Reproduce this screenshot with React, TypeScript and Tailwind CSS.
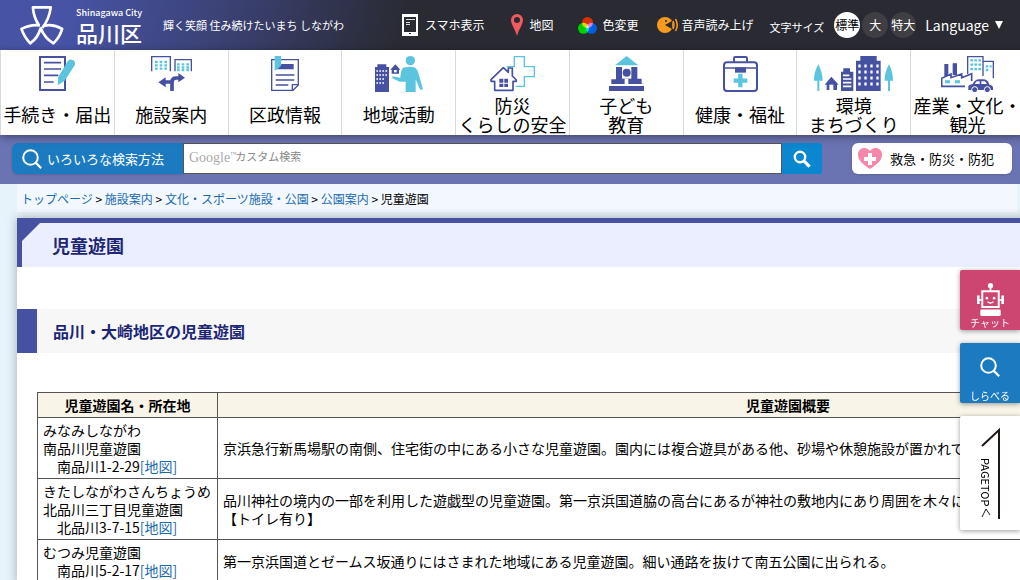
import type { ReactNode } from "react";

type MenuItem = {
  lines: string[];
  icon: ReactNode;
};

type Park = {
  lines: string[];
  address: string;
  outline: string[];
};

const parks: Park[] = [
  {
    lines: ["みなみしながわ", "南品川児童遊園"],
    address: "南品川1-2-29",
    outline: [
      "京浜急行新馬場駅の南側、住宅街の中にある小さな児童遊園。園内には複合遊具がある他、砂場や休憩施設が置かれている。",
    ],
  },
  {
    lines: ["きたしながわさんちょうめ", "北品川三丁目児童遊園"],
    address: "北品川3-7-15",
    outline: [
      "品川神社の境内の一部を利用した遊戯型の児童遊園。第一京浜国道脇の高台にあるが神社の敷地内にあり周囲を木々に囲まれている。",
      "【トイレ有り】",
    ],
  },
  {
    lines: ["むつみ児童遊園"],
    address: "南品川5-2-17",
    outline: [
      "第一京浜国道とゼームス坂通りにはさまれた地域にある児童遊園。細い通路を抜けて南五公園に出られる。",
    ],
  },
];

const crumbs = ["トップページ", "施設案内", "文化・スポーツ施設・公園", "公園案内"];

const BLUE = "#4751a1";
const CYAN = "#5bc5df";

const menu: MenuItem[] = [
  {
    lines: ["手続き・届出"],
    icon: (
      <svg viewBox="0 0 108 108" className="h-9 w-9" fill="none">
        <path d="M3 3H78V102H3Z" stroke={BLUE} strokeWidth="6" />
        <path d="M15 20H66M15 39H66M15 58H58M15 78H44" stroke={BLUE} strokeWidth="5" />
        <path d="M86 16Q93 7 103 13Q111 19 107 28L77 74L56 88L58 62Z" fill={CYAN} />
      </svg>
    ),
  },
  {
    lines: ["施設案内"],
    icon: (
      <svg viewBox="0 0 123 108" className="h-9 w-[41px]" fill="none">
        <path d="M2 46V2H58V46M72 46V11H121V46" stroke={BLUE} strokeWidth="4" />
        <path
          d="M12 18H48M12 28H48M12 38H48M78 25H114M78 34H114M78 42H114"
          stroke={CYAN}
          strokeWidth="7"
          strokeDasharray="8 6"
        />
        <path d="M63 105V78Q63 66 76 66H86M63 78H38" stroke={BLUE} strokeWidth="11" />
        <path d="M22 79L44 64V94ZM102 65L82 51V79Z" fill={BLUE} />
      </svg>
    ),
  },
  {
    lines: ["区政情報"],
    icon: (
      <svg viewBox="0 0 84 108" className="h-9 w-7" fill="none">
        <path d="M2 11H82V87L66 103H2Z" stroke={BLUE} strokeWidth="4" />
        <path d="M64 103V86H82" stroke={BLUE} strokeWidth="4" />
        <path d="M14 57H70M14 72H70M14 87H52" stroke={BLUE} strokeWidth="4" />
        <path d="M32 24H68V40H18Z" fill={BLUE} />
        <path d="M11 0H30V30L11 45Z" fill={CYAN} />
      </svg>
    ),
  },
  {
    lines: ["地域活動"],
    icon: (
      <svg viewBox="0 0 144 108" className="h-9 w-12" fill="none">
        <path d="M0 108V33H7V25H34V33H42V108Z" fill={BLUE} />
        <path
          d="M4 45H38M4 57H38M4 69H28M4 81H28"
          stroke="#fff"
          strokeWidth="5"
          strokeDasharray="5 4"
        />
        <path d="M46 41L61 25L76 41H72V53H50V41Z" fill={BLUE} />
        <path d="M57 42H65V49H57Z" fill="#fff" />
        <circle cx="106" cy="14" r="14" fill={CYAN} />
        <path
          d="M84 35Q106 29 121 35Q128 40 131 54L144 99L136 102L122 70V108H92V77H74L52 67L52 61L76 65Q78 40 84 35Z"
          fill={CYAN}
        />
      </svg>
    ),
  },
  {
    lines: ["防災", "くらしの安全"],
    icon: (
      <svg viewBox="0 0 135 108" className="h-9 w-[45px]" fill="none">
        <path
          d="M50 32H73V2H103V32H133V62H103V91H77"
          stroke={CYAN}
          strokeWidth="4"
        />
        <path
          d="M3 71L40 35L55 49V36H67V60L79 72V76H69V103H14V76H3Z"
          fill="#fff"
          stroke={BLUE}
          strokeWidth="5"
          strokeLinejoin="round"
        />
        <path d="M28 68H40V80H28ZM43 68H54V80H43ZM28 83H40V93H28ZM43 83H54V93H43Z" fill={BLUE} />
      </svg>
    ),
  },
  {
    lines: ["子ども", "教育"],
    icon: (
      <svg viewBox="0 0 105 108" className="h-9 w-[35px]">
        <path d="M53 0L88 28H18Z" fill={CYAN} />
        <path
          d="M21 33H85V68H98V83H105V105H0V90H7V70H21Z"
          fill={BLUE}
        />
        <path d="M39 33H67V68H39Z" fill="#fff" />
        <path d="M0 84H105V90H0ZM47 68H58V88H47Z" fill="#fff" />
        <circle cx="53" cy="50" r="12" fill={BLUE} />
      </svg>
    ),
  },
  {
    lines: ["健康・福祉"],
    icon: (
      <svg viewBox="0 0 105 108" className="h-9 w-[35px]" fill="none">
        <rect x="3" y="19" width="99" height="86" rx="9" stroke={BLUE} strokeWidth="6" />
        <path d="M33 18V7Q33 3 37 3H68Q72 3 72 7V18" stroke={BLUE} strokeWidth="6" />
        <path d="M5 36H100" stroke={BLUE} strokeWidth="5" />
        <path d="M36 34H69V50H36Z" fill={BLUE} />
        <path d="M52 53V94M32 74H73" stroke={CYAN} strokeWidth="13" />
      </svg>
    ),
  },
  {
    lines: ["環境", "まちづくり"],
    icon: (
      <svg viewBox="0 0 237 108" className="h-9 w-[79px]" fill="none">
        <path
          d="M13 24C3 42 0 58 0 74H10V105H16V74H26C26 58 22 42 13 24ZM225 24C215 42 212 58 212 74H222V105H228V74H237C237 58 234 42 225 24Z"
          fill={CYAN}
        />
        <path d="M32 86L52 62L74 86H69V102H38V86Z" fill={BLUE} />
        <path d="M46 86H58V102H46Z" fill="#fff" />
        <path d="M81 105V47H88V37H108V47H118V105Z" fill={BLUE} />
        <path d="M87 58H106M87 69H112M87 80H112M87 91H112" stroke="#fff" strokeWidth="5" />
        <path d="M126 105V14H139V0H188V14H200V105Z" fill={BLUE} />
        <path
          d="M133 30H196M133 48H196M133 66H196M133 84H196"
          stroke="#fff"
          strokeWidth="9"
          strokeDasharray="7 11"
        />
      </svg>
    ),
  },
  {
    lines: ["産業・文化・", "観光"],
    icon: (
      <svg viewBox="0 0 159 108" className="h-9 w-[53px]" fill="none">
        <path d="M80 54V2H126V60M126 16H157V67" stroke={BLUE} strokeWidth="4" />
        <path
          d="M88 13H122M88 26H122M88 39H122M134 31H152M134 42H145"
          stroke={CYAN}
          strokeWidth="7"
          strokeDasharray="8 4"
        />
        <path d="M10 60V24H22V60ZM35 57V22H48V57Z" fill={BLUE} />
        <path
          d="M72 91H2V67L30 54V65L62 54V65L92 53V75"
          stroke={BLUE}
          strokeWidth="5"
        />
        <path d="M12 77H72" stroke={CYAN} strokeWidth="9" strokeDasharray="15 15" />
        <path
          d="M82 102V91Q83 86 95 84Q102 70 114 70H129Q141 71 145 86Q156 88 156 95V102Z"
          fill={BLUE}
        />
        <path d="M101 84L107 76H116V84ZM121 76H132L138 84H121Z" fill="#fff" />
        <circle cx="101" cy="101" r="9" fill={BLUE} stroke="#fff" strokeWidth="3" />
        <circle cx="139" cy="101" r="9" fill={BLUE} stroke="#fff" strokeWidth="3" />
      </svg>
    ),
  },
];

function SearchIcon({ className }: { className: string }) {
  return (
    <svg viewBox="0 0 20 20" className={className} fill="none" stroke="#fff">
      <circle cx="8.5" cy="8.5" r="7.3" strokeWidth="2" />
      <path d="M13.6 13.6L19.2 19.2" strokeWidth="2.2" />
    </svg>
  );
}

function Logo() {
  return (
    <a href="#" className="flex items-center gap-3 text-white">
      <svg
        viewBox="0 0 130 116"
        className="h-[39px] w-[44px]"
        fill="none"
        stroke="#fff"
        strokeWidth="8"
        strokeLinejoin="round"
      >
        <path d="M56 58C46 42 39 24 38 4H91C88 28 80 47 66 65" />
        <path d="M59 58C41 55 22 59 4 68C9 84 18 98 30 111C44 101 55 88 60 68" />
        <path d="M60 63C68 84 82 101 99 111C112 99 120 84 125 68C108 58 89 54 70 59" />
      </svg>
      <span className="flex w-[67px] flex-col">
        <span className="text-[9px] leading-[14px] font-medium">Shinagawa City</span>
        <span className="text-[22px] leading-6 font-medium">品川区</span>
      </span>
    </a>
  );
}

function Header() {
  return (
    <header className="flex h-[50px] items-center bg-[linear-gradient(105deg,#4753a5_7%,#3b4274_22%,#292a32_40%)] pl-5 text-xs whitespace-nowrap text-white">
      <Logo />
      <p className="ml-5 text-[11px]">輝く笑顔 住み続けたいまち しながわ</p>

      <div className="ml-auto flex items-center pr-[17px]">
        <a href="#" className="flex items-center gap-[7px]">
          <svg viewBox="0 0 16 22" className="h-[22px] w-4">
            <path d="M0 0H16V22H0Z" fill="#fff" />
            <path d="M2 3H14V18H2Z" fill="#2a2a32" />
            <path d="M4 5H13V6H4ZM4 8H8V9H4ZM4 10H8V11H4Z" fill="#ddd" />
            <path d="M7 19H9V20H7Z" fill="#222" />
          </svg>
          スマホ表示
        </a>
        <a href="#" className="ml-[26px] flex items-center gap-[7px]">
          <svg viewBox="0 0 12 22" className="h-[22px] w-3">
            <path
              fillRule="evenodd"
              d="M6 0A6 6 0 0 1 12 6C12 10 8 15 6 22C4 15 0 10 0 6A6 6 0 0 1 6 0ZM6 3A3 3 0 1 0 6 9A3 3 0 1 0 6 3Z"
              fill="#f15a5e"
            />
          </svg>
          地図
        </a>
        <a href="#" className="ml-6 flex items-center gap-[6px]">
          <svg viewBox="0 0 19 17" className="h-[17px] w-[19px]">
            <g className="isolate">
              <circle cx="9.5" cy="5.5" r="5.5" fill="#d83000" />
              <circle cx="5.5" cy="11.3" r="5.5" fill="#00d000" className="mix-blend-screen" />
              <circle cx="13.5" cy="11.3" r="5.5" fill="#0060e0" className="mix-blend-screen" />
            </g>
          </svg>
          色変更
        </a>
        <a href="#" className="ml-[18px] flex items-center gap-1">
          <svg viewBox="0 0 21 16" className="h-4 w-[21px]" fill="none">
            <circle cx="8" cy="8" r="8" fill="#f9991d" />
            <path d="M8 8L15 4V12Z" fill="#2a2a32" />
            <circle cx="9" cy="4" r="1" fill="#2a2a32" />
            <path d="M16 4Q18 8 16 12M18.5 2Q22 8 18.5 14" stroke="#f9991d" strokeWidth="1.500" />
          </svg>
          音声読み上げ
        </a>

        <div className="ml-4 flex items-center gap-[2px]">
          <span className="mr-2 pt-1 text-[11px]">文字サイズ</span>
          <button className="size-[26px] rounded-full bg-white text-black">標準</button>
          <button className="size-[26px] rounded-full bg-[#3e3e43]">大</button>
          <button className="size-[26px] rounded-full bg-[#3e3e43]">特大</button>
        </div>

        <button className="ml-[9px] flex items-center gap-[6px] text-sm">
          Language
          <svg viewBox="0 0 8 8" className="size-2">
            <path d="M0 0H8L4 8Z" fill="#fff" />
          </svg>
        </button>
      </div>
    </header>
  );
}

function GlobalMenu() {
  return (
    <nav className="relative -mr-1 grid grid-cols-9 bg-white shadow-[0_2px_8px_rgba(0,0,0,0.4)]">
      {menu.map((item) => (
        <a
          key={item.lines[0]}
          href="#"
          className="flex h-[85px] flex-col items-center border-l border-[#d9d9e0] pt-[6px] text-lg leading-[19px] whitespace-nowrap text-black"
        >
          {item.icon}
          <span className="flex flex-1 flex-col items-center justify-center pt-[2px]">
            {item.lines.map((line) => (
              <span key={line}>{line}</span>
            ))}
          </span>
        </a>
      ))}
    </nav>
  );
}

function SearchBar() {
  return (
    <div className="flex h-[49px] items-start bg-[#6b74b2] pt-2 pr-2 pl-3 text-[13px]">
      <button className="flex h-[31px] w-[171px] items-center gap-[5px] rounded-l-md bg-[#1c7bc0] pl-[10px] text-white shadow">
        <SearchIcon className="size-5" />
        いろいろな検索方法
      </button>
      <form className="flex flex-1" onSubmit={(e) => e.preventDefault()}>
        <label className="flex h-[31px] flex-1 items-center border border-[#555] bg-white pl-[5px]">
          <span className="pb-[2px] font-['Liberation_Serif',serif] text-sm text-[#aaa]">
            Google
          </span>
          <span className="mb-2 w-[5px] font-['Liberation_Serif',serif] text-[6px] text-[#999]">
            ™
          </span>
          <input
            type="text"
            aria-label="サイト内検索"
            placeholder="カスタム検索"
            className="min-w-0 flex-1 pb-1 text-[11px] outline-none placeholder:text-[#888]"
          />
        </label>
        <button
          aria-label="検索"
          className="flex h-[31px] w-10 items-center justify-center rounded-r-xs bg-[#0b87cf]"
        >
          <svg viewBox="0 0 18 18" className="size-[18px]" fill="none" stroke="#fff">
            <circle cx="7" cy="7" r="5.2" strokeWidth="2.4" />
            <path d="M10.8 10.8L16.6 16.6" strokeWidth="3.2" />
          </svg>
        </button>
      </form>
      <a
        href="#"
        className="ml-[30px] flex h-[31px] w-40 items-center gap-2 rounded-md bg-white pl-[6px] text-black shadow"
      >
        <svg viewBox="0 0 24 21" className="h-[21px] w-6">
          <path
            d="M12 21C6 17 0 13 0 6.500C0 2.500 3 0 6.300 0C9 0 11 1.500 12 3C13 1.500 15 0 17.700 0C21 0 24 2.500 24 6.500C24 13 18 17 12 21Z"
            fill="#f587a8"
          />
          <path d="M10 5H14V9H18V13H14V17H10V13H6V9H10Z" fill="#fff" />
        </svg>
        救急・防災・防犯
      </a>
    </div>
  );
}

function Breadcrumb() {
  return (
    <nav
      aria-label="現在位置"
      className="mr-[3px] ml-[17px] h-7 bg-[#f2f8fd] pl-1 text-xs leading-[30px] whitespace-nowrap"
    >
      {crumbs.map((crumb) => (
        <span key={crumb}>
          <a href="#" className="text-[#1c6bb0]">
            {crumb}
          </a>
          {" > "}
        </span>
      ))}
      児童遊園
    </nav>
  );
}

function ParkTable() {
  return (
    <table className="w-full border-collapse text-sm leading-[18px]">
      <thead>
        <tr className="bg-[#f9f4e8]">
          <th className="w-[180px] border border-[#555] px-[5px] py-[3px]">児童遊園名・所在地</th>
          <th className="border border-[#555] px-[5px] py-[3px]">児童遊園概要</th>
        </tr>
      </thead>
      <tbody>
        {parks.map((park) => (
          <tr key={park.address}>
            <td className="border border-[#555] px-[5px] py-[3px] whitespace-nowrap">
              {park.lines.map((line) => (
                <p key={line}>{line}</p>
              ))}
              <p>
                {"\u3000"}
                {park.address}
                <a href="#" className="text-[#1c6bb0]">
                  [地図]
                </a>
              </p>
            </td>
            <td className="border border-[#555] px-[5px] py-[3px]">
              {park.outline.map((line) => (
                <p key={line}>{line}</p>
              ))}
            </td>
          </tr>
        ))}
      </tbody>
    </table>
  );
}

function SideButtons() {
  return (
    <aside className="fixed top-[270px] right-0 flex w-[60px] flex-col gap-[13px] text-[10px] leading-[14px] text-white">
      <button className="flex h-[60px] flex-col items-center justify-end rounded-l-xs bg-[#cc4671] shadow-[0_1px_5px_rgba(0,0,0,0.4)]">
        <svg viewBox="0 0 82 100" className="h-[33px] w-[27px]" fill="none">
          <circle cx="41" cy="8" r="8" fill="#fff" />
          <path d="M41 12V24" stroke="#fff" strokeWidth="5" />
          <path d="M16 25H66V73H16Z" stroke="#fff" strokeWidth="6" />
          <path d="M0 38H8V64H0ZM74 38H82V64H74ZM8 49H14V54H8ZM68 49H74V54H68Z" fill="#fff" />
          <circle cx="30" cy="46" r="4" fill="#fff" />
          <circle cx="52" cy="46" r="4" fill="#fff" />
          <path d="M32 57Q41 64 50 57" stroke="#fff" strokeWidth="4" />
          <rect x="10" y="80" width="62" height="20" rx="4" fill="#fff" />
        </svg>
        チャット
      </button>
      <button className="flex h-[60px] flex-col items-center justify-end gap-3 rounded-l-xs bg-[#1c7bc0] shadow-[0_1px_5px_rgba(0,0,0,0.4)]">
        <SearchIcon className="size-5" />
        しらべる
      </button>
      <a
        href="#"
        className="relative flex h-[114px] items-center rounded-l-xs bg-white pt-[18px] pl-[18px] text-[11px] leading-4 text-black shadow-[0_1px_5px_rgba(0,0,0,0.4)]"
      >
        <span className="[writing-mode:vertical-rl]">PAGETOP</span>
        <svg viewBox="0 0 60 114" className="absolute inset-0" fill="none" stroke="#1f1815">
          <path d="M22 30L39 14V103" strokeWidth="2" />
          <path d="M22 101L26 93L30 99" strokeWidth="1" />
        </svg>
      </a>
    </aside>
  );
}

export default function App() {
  return (
    <div className="min-h-screen overflow-x-clip bg-[#e7f3fa] font-['Noto_Sans_CJK_JP',sans-serif] text-black">
      <Header />
      <GlobalMenu />
      <SearchBar />
      <Breadcrumb />

      <main className="mt-[6px] ml-[17px] min-w-[1362px] bg-white shadow-[0_0_10px_rgba(0,0,0,0.3)]">
        <h1 className="relative border-t-[5px] border-l-[5px] border-[#4751a1] bg-[#ebeeff] pl-[30px] text-lg leading-[44px] font-bold text-[#1c2674]">
          <span className="absolute top-0 left-0 size-[18px] bg-[#4751a1] [clip-path:polygon(0_0,100%_0,0_100%)]" />
          児童遊園
        </h1>
        <h2 className="mt-[42px] border-l-[20px] border-[#4751a1] bg-[#f7f7f7] pl-4 text-base leading-[44px] font-bold text-[#1c2674]">
          品川・大崎地区の児童遊園
        </h2>
        <div className="mt-[39px] px-5">
          <ParkTable />
        </div>
      </main>

      <SideButtons />
    </div>
  );
}
